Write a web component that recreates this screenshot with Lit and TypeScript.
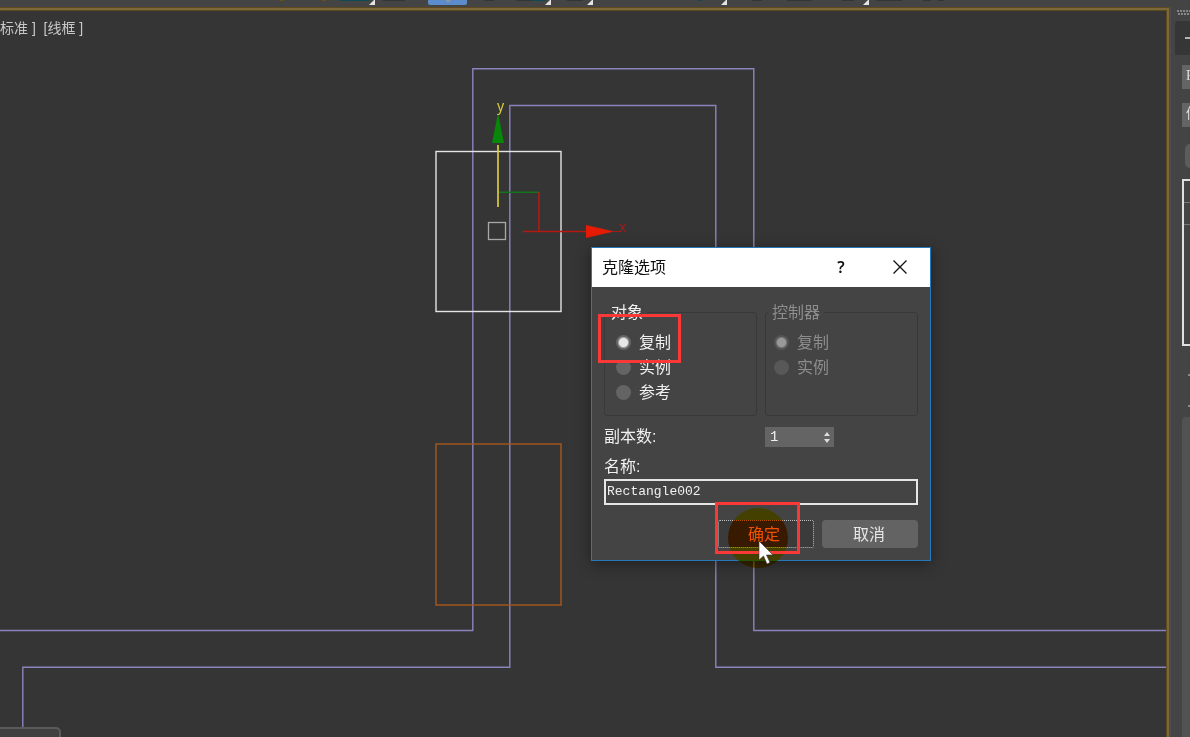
import { LitElement, html, svg, css } from "lit";
import { customElement, state } from "lit/decorators.js";

const ROOT_FONT = css`"Liberation Sans", "Noto Sans CJK SC", sans-serif`;

@customElement("main-toolbar")
class MainToolbar extends LitElement {
  static styles = css`
    :host { display: block; height: 7px; background: #444444; overflow: hidden; }
    svg { display: block; }
    .sel { fill: #5d8ccb; }
    .selmark { fill: #8c98a0; }
    .teal { fill: #0d4c52; }
    .dark { fill: #343636; }
    .corner { fill: #e4e4e4; }
    .gold { fill: #6a4f16; }
  `;
  render() {
    return html`<svg width="1190" height="7" aria-hidden="true">
      <rect class="gold" x="280" y="0" width="4" height="1" />
      <rect class="gold" x="322" y="0" width="4" height="1" />
      <rect class="teal" x="340" y="0" width="30" height="1" />
      <rect class="dark" x="383" y="0" width="22" height="1" />
      <rect class="sel" x="428" y="-6" width="39" height="11" rx="2" />
      <path class="selmark" d="M446 0h5l-2 2h-2z" />
      <rect class="dark" x="484" y="0" width="10" height="1" />
      <rect class="dark" x="516" y="0" width="18" height="1" />
      <rect class="teal" x="532" y="0" width="14" height="1" />
      <rect class="dark" x="567" y="0" width="16" height="1" />
      <rect class="teal" x="697" y="0" width="5" height="1" />
      <rect class="dark" x="752" y="0" width="10" height="1" />
      <rect class="dark" x="787" y="0" width="25" height="1" />
      <rect class="dark" x="842" y="0" width="12" height="1" />
      <rect class="dark" x="876" y="0" width="26" height="1" />
      <rect class="dark" x="923" y="0" width="8" height="1" />
      <rect class="dark" x="938" y="0" width="6" height="1" />
      ${[375, 551, 593, 727, 869].map(
        (x) => svg`<path class="corner" d="M${x} -1V5H${x - 6}Z" />`
      )}
    </svg>`;
  }
}

@customElement("side-panel")
class SidePanel extends LitElement {
  static styles = css`
    :host {
      display: flex; flex-direction: column; box-sizing: border-box;
      padding-left: 11px; background: #444444; overflow: hidden;
      border-left: 1px solid #4d4d4d;
      font: 14px/20px "Liberation Serif", "Noto Sans CJK SC", sans-serif; color: #dddddd;
    }
    .grip { height: 5px; margin: 3px 0 6px -5px; flex: none;
      background: repeating-linear-gradient(90deg, #888888 0 2px, transparent 2px 3px) top / 100% 2px no-repeat,
        repeating-linear-gradient(90deg, transparent 0 1px, #888888 1px 3px) bottom / 100% 2px no-repeat; }
    .tab { height: 34px; margin-left: -7px; flex: none; background: #363636;
      border-radius: 4px 0 0 0; display: flex; align-items: center; justify-content: flex-end; }
    .dash { width: 5px; height: 2px; background: #b4b4b4; }
    .field { height: 24px; flex: none; margin-top: 10px; background: #646464;
      overflow: hidden; padding-left: 4px; white-space: nowrap; line-height: 22px; }
    .field + .field { margin-top: 14px; }
    .chip { height: 24px; flex: none; margin: 17px 0 0 3px; background: #5c5c5c; border-radius: 5px 0 0 5px; }
    .list { height: 163px; flex: none; margin-top: 11px; border: 2px solid #e0e0e0; border-right: 0; }
    .line { height: 22px; border-bottom: 1px solid #777777; box-sizing: border-box; }
    .ticks { height: 71px; flex: none; display: flex; flex-direction: column; align-items: flex-end;
      gap: 29px; box-sizing: border-box; padding-top: 28px; }
    .tick { width: 2px; height: 2px; background: #888888; }
    .rest { flex: 1; background: #525252; border-radius: 4px 0 0 0; }
  `;
  render() {
    return html`
      <div class="grip"></div>
      <div class="tab"><div class="dash"></div></div>
      <div class="field">Rectangle002</div>
      <div class="field">修改器列表</div>
      <div class="chip"></div>
      <div class="list"><div class="line"></div><div class="line"></div></div>
      <div class="ticks"><div class="tick"></div><div class="tick"></div></div>
      <div class="rest"></div>
    `;
  }
}

@customElement("clone-dialog")
class CloneDialog extends LitElement {
  static styles = css`
    :host {
      display: block; box-sizing: border-box; border: 1px solid #2878b8;
      background: #444444; color: #f0f0f0;
      box-shadow: 0 3px 14px rgba(0, 0, 0, 0.4);
      font: 16px/18px ${ROOT_FONT};
    }
    header { display: flex; align-items: center; height: 39px; background: #ffffff; color: #111111; padding-left: 10px; }
    h1 { flex: 1; margin: 0; font: inherit; }
    header button { border: 0; background: none; padding: 0 1px 2px 0; width: 59px; height: 39px; color: inherit;
      font: 600 16px/18px "Noto Sans", sans-serif; display: grid; place-items: center; }
    form { padding: 15px 12px 12px; }
    .pair { display: grid; grid-template-columns: 1fr 1fr; gap: 8px; }
    fieldset { margin: 0; min-width: 0; border: 1px solid #393939; border-radius: 3px; padding: 8px 11px 10px 11px; }
    legend { padding: 2px 4px 0; margin-left: -9px; }
    fieldset:disabled { color: #8d8d8d; padding-left: 8px; }
    fieldset:disabled legend { margin-left: -6px; }
    .option { display: flex; align-items: center; gap: 8px; height: 25px; }
    input[type="radio"] { appearance: none; margin: 0; width: 15px; height: 15px; border-radius: 50%; background: #646464; }
    input[type="radio"]:checked { background: radial-gradient(circle, #e8e8e8 0 4px, #666666 6px); }
    fieldset:disabled input { background: #585858; }
    fieldset:disabled input[type="radio"]:checked { background: radial-gradient(circle, #999999 0 4px, #555555 6px); }
    .copies { margin-top: 11px; align-items: center; }
    .spin { display: flex; align-items: center; box-sizing: border-box; width: 69px; height: 20px; background: #646464; padding: 0 4px 0 5px; }
    .spin input { flex: 1; min-width: 0; border: 0; padding: 0; background: none; color: #f0f0f0; outline: 0;
      font: 14px/18px "Liberation Mono", monospace; }
    .steps { display: grid; gap: 3px; }
    .steps button { border: 0; padding: 0; background: none; display: block; height: 4px; }
    .steps svg { display: block; fill: #dddddd; }
    .name-label { display: block; margin: 11px 0 3px; }
    .name { display: block; box-sizing: border-box; width: 100%; height: 26px; border: 2px solid #e6e6e6; padding: 0 1px 2px;
      background: #444444; color: #f0f0f0; outline: 0; font: 13px/18px "Liberation Mono", monospace; }
    .actions { display: flex; justify-content: flex-end; gap: 8px; margin-top: 15px; }
    .actions button { width: 96px; height: 28px; padding: 2px 2px 0 0; border: 0; border-radius: 4px; background: #636363; color: #e6e6e6; font: inherit; }
    .actions .ok { background: #3b3b3b; border: 1px dotted #c0c0c0; color: #ffb568; border-radius: 2px; padding-right: 4px; }
  `;
  @state() copies = 1;

  option(group: string, label: string, checked = false) {
    const id = `${group}-${label}`;
    return html`<div class="option">
      <input type="radio" id=${id} name=${group} ?checked=${checked} /><label for=${id}>${label}</label>
    </div>`;
  }

  render() {
    return html`
      <header>
        <h1>克隆选项</h1>
        <button type="button" aria-label="帮助">?</button>
        <button type="button" aria-label="关闭">
          <svg width="14" height="14" fill="none" stroke="#111" stroke-width="1.3"><path d="M.5 .5l13 13M13.5 .5l-13 13" /></svg>
        </button>
      </header>
      <form @submit=${(e: Event) => e.preventDefault()}>
        <div class="pair">
          <fieldset>
            <legend>对象</legend>
            ${this.option("object", "复制", true)}${this.option("object", "实例")}${this.option("object", "参考")}
          </fieldset>
          <fieldset disabled>
            <legend>控制器</legend>
            ${this.option("controller", "复制", true)}${this.option("controller", "实例")}
          </fieldset>
        </div>
        <div class="pair copies">
          <label for="copies">副本数:</label>
          <div class="spin">
            <input id="copies" inputmode="numeric" .value=${String(this.copies)} />
            <div class="steps">
              <button type="button" aria-label="增加" @click=${() => this.copies++}><svg width="6" height="4"><path d="M3 0L6 4H0z" /></svg></button>
              <button type="button" aria-label="减少" @click=${() => (this.copies = Math.max(1, this.copies - 1))}><svg width="6" height="4"><path d="M0 0H6L3 4z" /></svg></button>
            </div>
          </div>
        </div>
        <label class="name-label" for="name">名称:</label>
        <input class="name" id="name" value="Rectangle002" spellcheck="false" />
        <div class="actions">
          <button class="ok">确定</button>
          <button type="button">取消</button>
        </div>
      </form>
    `;
  }
}

@customElement("view-port")
class ViewPort extends LitElement {
  static styles = css`
    :host { display: block; position: relative; overflow: hidden; background: #353535; }
    .frame { position: absolute; inset: 0; border: solid #5c4a1e; border-width: 4px 4px 0 0; }
    .frame::after { content: ""; position: absolute; inset: -3px -3px 0 0; border: solid #7b693b; border-width: 2px 2px 0 0; }
    .scene { position: absolute; left: 0; top: -7px; fill: none; }
    .wall { stroke: #8a84bd; stroke-width: 1.4; }
    .axis { font: 14px "Noto Sans", sans-serif; stroke: none; }
    .view-label { display: block; padding: 12px 0 0; font: 14px/18px ${ROOT_FONT}; color: #c8c8c8; white-space: pre; }
    .tab { position: absolute; left: -4px; bottom: -2px; width: 65px; height: 12px; box-sizing: border-box;
      border: 2px solid #5a5a5a; border-radius: 0 5px 0 0; background: #404040; }
  `;
  render() {
    return html`
      <div class="view-label">标准 ]  [线框 ]</div>
      <svg class="scene" width="1166" height="737" aria-hidden="true">
        <g class="wall">
          <path d="M0 630.500H472.800V68.800H753.800V630.500H1166" />
          <path d="M22.800 737V667.300H509.800V105.500H715.800V667.300H1166" />
        </g>
        <rect x="436" y="151.500" width="125" height="160" stroke="#e4e4e4" stroke-width="1.400" />
        <rect x="436" y="444" width="125" height="161" stroke="#a9591d" stroke-width="1.400" />
        <path d="M498 145V207" stroke="#d8cb3a" stroke-width="1.700" />
        <path d="M498 113L504 143H492Z" fill="#078607" />
        <path d="M499 192.300H539" stroke="#12741c" stroke-width="1.600" />
        <path d="M539 192V231M523 231.500H587" stroke="#b51912" stroke-width="1.600" />
        <path d="M586 225L614 231.500L586 238Z" fill="#e51b05" />
        <path d="M612 231.500H621" stroke="#9d1d18" />
        <rect x="488.500" y="222.500" width="17" height="17" stroke="#a8a8a8" stroke-width="1.300" />
        <text class="axis" x="497" y="111" fill="#d8cb3a">y</text>
        <text class="axis" x="619" y="232" fill="#a01c18">x</text>
      </svg>
      <div class="tab"></div>
      <div class="frame"></div>
    `;
  }
}

@customElement("app-root")
class AppRoot extends LitElement {
  static styles = css`
    :host { display: grid; position: relative; grid-template: auto 1fr / 1fr 20px; width: 100%; height: 100vh; overflow: hidden; background: #444444; }
    main-toolbar { grid-column: 1 / -1; }
    clone-dialog { position: absolute; left: 591px; top: 247px; width: 340px; }
    .mark { position: absolute; box-sizing: border-box; border: 3px solid #fb3838; pointer-events: none; }
    .mark-copy { left: 598px; top: 314px; width: 83px; height: 49px; }
    .mark-ok { left: 715px; top: 502px; width: 85px; height: 52px; }
    .halo { position: absolute; left: 728px; top: 508px; width: 60px; height: 60px; border-radius: 50%;
      background: linear-gradient(#fff000 0 12px, #f27000 12px 39px, #fff000 39px 52px, #ffb000 52px);
      mix-blend-mode: multiply; pointer-events: none; }
    .cursor { position: absolute; left: 758px; top: 540px; pointer-events: none; }
  `;
  render() {
    return html`
      <main-toolbar></main-toolbar>
      <view-port></view-port>
      <side-panel></side-panel>
      <clone-dialog></clone-dialog>
      <div class="halo"></div>
      <div class="mark mark-copy"></div>
      <div class="mark mark-ok"></div>
      <svg class="cursor" width="16" height="26" viewBox="0 0 16 26" aria-hidden="true">
        <path d="M1 1V20L5.500 16L9 24L12 22.500L8.500 15H15Z" fill="#fff" stroke="#333" stroke-width=".6" />
      </svg>
    `;
  }
}
